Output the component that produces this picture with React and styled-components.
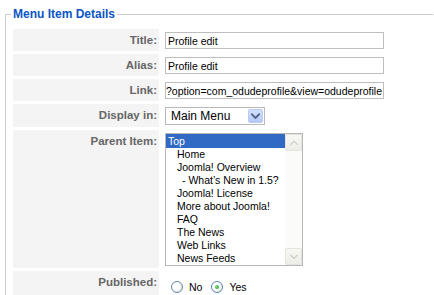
import React from 'react';
import styled, { createGlobalStyle } from 'styled-components';

const parents = [
  { label: 'Top', indent: 2, selected: true },
  { label: 'Home', indent: 11 },
  { label: 'Joomla! Overview', indent: 11 },
  { label: '- What\u2019s New in 1.5?', indent: 16 },
  { label: 'Joomla! License', indent: 11 },
  { label: 'More about Joomla!', indent: 11 },
  { label: 'FAQ', indent: 11 },
  { label: 'The News', indent: 11 },
  { label: 'Web Links', indent: 11 },
  { label: 'News Feeds', indent: 11 },
];

function Chevron({ up, color, size = 9, weight = 1.6 }) {
  return (
    <svg width={size} height={size * 0.7} viewBox="0 0 10 7">
      <path
        d={up ? 'M1 5.5 L5 1.5 L9 5.5' : 'M1 1.5 L5 5.5 L9 1.5'}
        fill="none"
        stroke={color}
        strokeWidth={weight}
        strokeLinecap="square"
      />
    </svg>
  );
}

function MenuItemDetails() {
  return (
    <>
      <GlobalStyle />
      <Fieldset>
        <Legend>Menu Item Details</Legend>
        <Form>
          <Key>Title:</Key>
          <Value>
            <TextBox readOnly value="Profile edit" />
          </Value>

          <Key>Alias:</Key>
          <Value>
            <TextBox readOnly value="Profile edit" />
          </Value>

          <Key>Link:</Key>
          <Value>
            <TextBox readOnly $flush value="?option=com_odudeprofile&view=odudeprofile" />
          </Value>

          <Key>Display in:</Key>
          <Value>
            <Select>
              <span>Main Menu</span>
              <DropButton>
                <Chevron color="#4d6185" size={9} weight={2} />
              </DropButton>
            </Select>
          </Value>

          <Key>Parent Item:</Key>
          <Value>
            <ListBox>
              <Options>
                {parents.map((p) => (
                  <Option key={p.label} $indent={p.indent} $selected={p.selected}>
                    {p.label}
                  </Option>
                ))}
              </Options>
              <Scrollbar>
                <ScrollButton>
                  <Chevron up color="#cbcbc3" size={8} weight={1.4} />
                </ScrollButton>
                <ScrollButton>
                  <Chevron color="#cbcbc3" size={8} weight={1.4} />
                </ScrollButton>
              </Scrollbar>
            </ListBox>
          </Value>

          <Key>Published:</Key>
          <Value $top={9} $bottom={12}>
            <RadioGroup>
              <Radio />
              <RadioLabel>No</RadioLabel>
              <Radio $checked />
              <RadioLabel>Yes</RadioLabel>
            </RadioGroup>
          </Value>
        </Form>
      </Fieldset>
    </>
  );
}

const GlobalStyle = createGlobalStyle`
  html, body {
    margin: 0;
    padding: 0;
    background: #fff;
    overflow: hidden;
  }
  body {
    font-family: "Liberation Sans", Arial, sans-serif;
  }
`;

const Fieldset = styled.fieldset`
  box-sizing: border-box;
  width: 429px;
  min-width: 0;
  margin: 7px 0 0 5px;
  padding: 8px 0 4px 5px;
  border: 1px solid #cccccc;
  border-right-color: transparent;
`;

const Legend = styled.legend`
  padding: 0 2px;
  color: #0b55c4;
  font: bold 12px/14px "Liberation Sans", Arial, sans-serif;
`;

const Form = styled.div`
  display: grid;
  grid-template-columns: 146px 1fr;
  column-gap: 2px;
  row-gap: 3px;
  margin-left: 2px;
`;

const Key = styled.div`
  background: #f4f4f4;
  color: #666;
  font-weight: bold;
  font-size: 11.5px;
  line-height: 14px;
  text-align: right;
  padding: 4px 2px 0 0;
`;

const Value = styled.div`
  display: flex;
  align-items: flex-start;
  padding: ${(p) => p.$top ?? 3}px 0 ${(p) => p.$bottom ?? 2}px 4px;
`;

const TextBox = styled.input`
  box-sizing: border-box;
  width: 219px;
  height: 17px;
  margin: 0;
  border: 1px solid #bdbdbd;
  padding: 0 0 0 ${(p) => (p.$flush ? 0 : 2)}px;
  background: #fff;
  color: #000;
  font: 10.5px "Liberation Sans", Arial, sans-serif;
  outline: none;
`;

const Select = styled.div`
  box-sizing: border-box;
  width: 100px;
  height: 18px;
  display: flex;
  align-items: center;
  justify-content: space-between;
  padding: 0 1px 0 5px;
  border: 1px solid #b9b9b9;
  background: #fff;
  color: #000;
  font-size: 12px;
`;

const DropButton = styled.span`
  box-sizing: border-box;
  width: 15px;
  height: 14px;
  display: flex;
  align-items: center;
  justify-content: center;
  border: 1px solid #b8cbf7;
  border-radius: 2px;
  background: linear-gradient(#d3e0fd, #b6c9f6);
`;

const ListBox = styled.div`
  box-sizing: border-box;
  width: 138px;
  height: 133px;
  display: flex;
  border: 1px solid #b7b7b7;
  background: #fff;
`;

const Options = styled.ul`
  flex: 1;
  margin: 0;
  padding: 0;
  list-style: none;
  font-size: 10.5px;
`;

const Option = styled.li`
  height: ${(p) => (p.$selected ? 14 : 13)}px;
  line-height: ${(p) => (p.$selected ? 14 : 13)}px;
  padding-left: ${(p) => p.$indent}px;
  white-space: nowrap;
  background: ${(p) => (p.$selected ? '#316ac5' : 'transparent')};
  color: ${(p) => (p.$selected ? '#fff' : '#000')};
`;

const Scrollbar = styled.div`
  width: 17px;
  display: flex;
  flex-direction: column;
  justify-content: space-between;
  background: #fbfbf9;
`;

const ScrollButton = styled.span`
  box-sizing: border-box;
  height: 17px;
  display: flex;
  align-items: center;
  justify-content: center;
  border: 1px solid #e4e4dc;
  border-radius: 2px;
  background: linear-gradient(#f7f7f4, #eeeee8);
`;

const RadioGroup = styled.div`
  display: flex;
  align-items: center;
  margin-left: 6px;
  font-size: 10.5px;
  line-height: 12px;
  color: #000;
`;

const Radio = styled.span`
  box-sizing: border-box;
  width: 12px;
  height: 12px;
  display: flex;
  align-items: center;
  justify-content: center;
  border: 1px solid #5f82aa;
  border-radius: 50%;
  background: radial-gradient(circle at 35% 35%, #fff 40%, #dcdcd6);

  &::after {
    content: '';
    display: ${(p) => (p.$checked ? 'block' : 'none')};
    width: 4px;
    height: 4px;
    border-radius: 50%;
    background: radial-gradient(circle at 40% 40%, #7ae07a, #1f9a1f);
  }
`;

const RadioLabel = styled.span`
  margin: 1px 9px 0 6px;
`;

export default MenuItemDetails;
